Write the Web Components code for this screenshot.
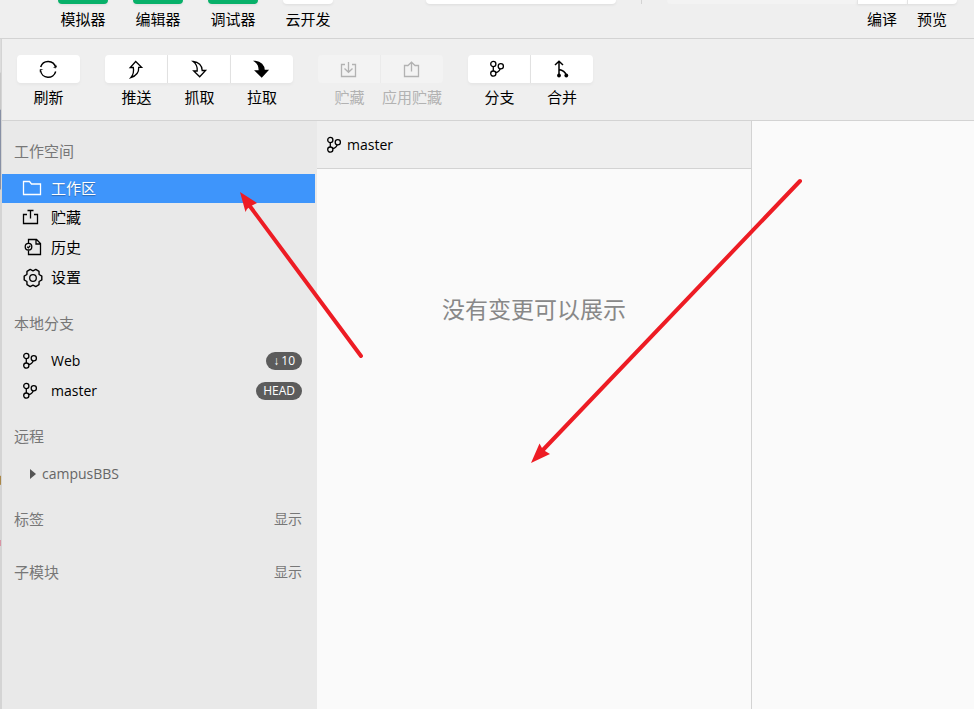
<!DOCTYPE html>
<html lang="zh-CN">
<head>
<meta charset="utf-8">
<title>版本管理</title>
<style>
html, body { height: 100%; }
body { margin: 0; background: #efefef; color: #000; font: 15px/24px "Open Sans", "Noto Sans CJK SC", sans-serif; }
</style>
</head>
<body>
<git-app></git-app>
<script>
const RESET = `*{box-sizing:border-box}
button{font:inherit;color:inherit;background:none;border:0;margin:0;padding:0;cursor:pointer}`;

function define(name, css, html, setup) {
  const template = document.createElement('template');
  template.innerHTML = `<style>${RESET}${css}</style>${html}`;
  customElements.define(name, class extends HTMLElement {
    connectedCallback() {
      if (this.shadowRoot) return;
      const root = this.attachShadow({ mode: 'open' });
      root.append(template.content.cloneNode(true));
      if (setup) setup(this, root);
    }
  });
}

const ICONS = {
  refresh: `<path stroke-width="1.500" d="M1.700 8A7.800 8 0 0 1 16.700 8.500M16.700 12.500A7.800 8 0 0 1 1.500 11.500"/><path fill="currentColor" stroke="none" d="M13.800 8.200H17.800V5.500L16.500 9.500ZM.8 13.500V10.200H4.500L2 11.200Z"/>`,
  push: `<path d="M9.700 2.500 15.600 8.300H12.700C13 13 10 17 4.800 18.600 7.500 15.500 8 12 7.300 8.500H4.200Z"/>`,
  fetch: `<path d="M4.200 2.500C9.500 3 13.200 6.500 13.200 11.500H16.600L10.700 17.800 4.700 12H8.200C8.600 8 7.500 5 4.200 2.500Z"/>`,
  pull: `<path fill="currentColor" d="M3.200 2.500C8.500 3 12.200 6.500 12.200 11.500H15.600L9.700 17.800 3.700 12H7.200C7.600 8 6.500 5 3.200 2.500Z"/>`,
  save: `<path d="M6 5.500H2.500V17.500H16.500V5.500H13M9.500 3V13M5.500 9.500 9.500 13.300 13.500 9.500"/>`,
  apply: `<path d="M6 6.500H2.500V17.500H16.500V6.500H13M9.500 12.500V3.500M5.500 7 9.500 3.200 13.500 7"/>`,
  branch: `<circle cx="4.300" cy="5" r="2.600"/><circle cx="4.300" cy="14.600" r="2.600"/><circle cx="11.800" cy="7.300" r="2.600"/><path d="M4.300 7.600V12M11.200 9.900C10.500 12 8.500 13.300 6.700 13.700"/>`,
  merge: `<path stroke-width="1.500" d="M7 16.500V2.500M3 6 7 2.200 11 6M7 10.500C10 11 13 12.500 14.300 16"/><circle cx="7" cy="16.500" r="1.900" fill="currentColor" stroke="none"/><circle cx="14.300" cy="16.500" r="1.900" fill="currentColor" stroke="none"/>`,
  folder: `<path d="M1.500 15.500V2.500H7.500L9.500 5H18.500V15.500Z"/>`,
  stash: `<path d="M5 6.500H1.500V15.500H15.500V6.500H12M8.500 10.500V2.500M5.500 2.500H11.500"/>`,
  history: `<path d="M6.500 5V1.500H14.500L18.500 5.500V16.500H6.500V12.500M14 1.500V6H18.500"/><circle cx="6.500" cy="8.700" r="3.300"/><path d="M5.200 8.700 6.400 9.800 8.300 7.600"/>`,
  gear: `<path stroke-linejoin="round" stroke-width="1.400" d="M19.800 11.900 17.100 13.500 17 16.700 13.800 18.600 11 17.200 8.200 18.600 5 16.700 4.900 13.500 2.200 11.900V8.100L4.900 6.500 5 3.300 8.200 1.400 11 2.800 13.800 1.400 17 3.300 17.100 6.500 19.800 8.100Z"/><circle cx="11" cy="10" r="3.300"/>`
};

define('ui-icon',
  `:host{display:block;width:20px;height:20px;flex:none}
   svg{display:block;width:100%;height:100%;overflow:visible;fill:none;stroke:currentColor;stroke-width:1.300}`,
  `<svg viewBox="0 0 20 20" aria-hidden="true"></svg>`,
  (el, root) => { root.querySelector('svg').innerHTML = ICONS[el.getAttribute('name')]; });

/* Tab of the upper bar: the lower edge of its button, then its label */
define('bar-button',
  `:host{display:block;min-width:50px}
   button{display:block;width:100%}
   i{display:block;height:4px;margin-bottom:3px;background:#fff;border-radius:0 0 4px 4px;box-shadow:0 1px 3px rgba(0,0,0,.08)}
   :host([active]) i{background:#07b069}
   :host([joined]) i{border-left:1px solid #e4e4e4;border-radius:0}
   :host([joined]:last-child) i{border-bottom-right-radius:4px}
   span{display:block;line-height:24px;white-space:nowrap}`,
  `<button type="button"><i></i><span><slot></slot></span></button>`);

define('top-bar',
  `:host{display:flex;align-items:flex-start;height:39px;border-bottom:1px solid #d3d3d3;padding:0 17px 0 58px}
   nav{display:flex;gap:25px}
   .mode{width:190px;height:4px;margin-left:93px;background:#fff;border-radius:0 0 4px 4px;box-shadow:0 1px 3px rgba(0,0,0,.08)}
   .rule{width:1px;height:4px;margin-left:25px;background:#d3d3d3}
   .target{flex:1;height:4px;margin-left:25px;background:#f3f3f3;border-radius:0 0 0 4px}
   .run{display:flex}`,
  `<nav>
    <bar-button active>模拟器</bar-button><bar-button active>编辑器</bar-button>
    <bar-button active>调试器</bar-button><bar-button>云开发</bar-button>
  </nav>
  <div class="mode"></div><div class="rule"></div><div class="target"></div>
  <div class="run"><bar-button joined>编译</bar-button><bar-button joined>预览</bar-button></div>`);

define('tool-button',
  `:host{display:block;width:63px}
   :host(:last-child:not(:first-child)){width:62px}
   button{display:block;width:100%}
   button:disabled{color:#b2b2b2;cursor:default}
   .face{display:flex;align-items:center;justify-content:center;height:28px;background:#fff;box-shadow:0 2px 3px rgba(0,0,0,.04);border-right:1px solid #e4e4e4}
   button:disabled .face{background:#f3f3f3;border-color:#ebebeb;box-shadow:none}
   :host(:first-child) .face{border-radius:4px 0 0 4px}
   :host(:last-child) .face{border-radius:0 4px 4px 0;border-right:0}
   :host(:only-child) .face{border-radius:4px}
   .label{display:block;margin-top:2px;line-height:24px;white-space:nowrap}`,
  `<button type="button"><span class="face"></span><span class="label"><slot></slot></span></button>`,
  (el, root) => {
    const icon = document.createElement('ui-icon');
    icon.setAttribute('name', el.getAttribute('icon'));
    root.querySelector('.face').append(icon);
    root.querySelector('button').disabled = el.hasAttribute('disabled');
  });

define('tool-bar',
  `:host{display:flex;gap:25px;padding:16px 15px 11px;background:#efefef;border-bottom:1px solid #d3d3d3}
   div{display:flex}`,
  `<div><tool-button icon="refresh">刷新</tool-button></div>
   <div><tool-button icon="push">推送</tool-button><tool-button icon="fetch">抓取</tool-button><tool-button icon="pull">拉取</tool-button></div>
   <div><tool-button icon="save" disabled>贮藏</tool-button><tool-button icon="apply" disabled>应用贮藏</tool-button></div>
   <div><tool-button icon="branch">分支</tool-button><tool-button icon="merge">合并</tool-button></div>`);

define('side-section',
  `:host{display:block;padding-top:15px}
   header{display:flex;align-items:center;justify-content:space-between;height:30px;margin-bottom:8px;padding:0 15px 0 12px;color:#777}
   h2{margin:0;font-size:15px;font-weight:400}
   button{font-size:14px}`,
  `<header><h2></h2></header><slot></slot>`,
  (el, root) => {
    root.querySelector('h2').textContent = el.getAttribute('heading');
    if (el.hasAttribute('action')) {
      const button = document.createElement('button');
      button.type = 'button';
      button.textContent = el.getAttribute('action');
      root.querySelector('header').append(button);
    }
  });

define('side-item',
  `:host{display:block}
   button{display:flex;align-items:center;gap:9px;width:100%;height:30px;padding:0 15px 0 20px;text-align:left}
   .text{flex:1;padding-bottom:2px}
   :host([latin]) .text{font-size:14px;padding:0}
   :host([selected]) button{height:29px;width:calc(100% - 2px);background:#3e95fb;color:#fff;text-shadow:0 1px 1px rgba(0,0,0,.3)}`,
  `<button type="button"><span class="text"><slot></slot></span><slot name="badge"></slot></button>`,
  (el, root) => {
    const icon = document.createElement('ui-icon');
    icon.setAttribute('name', el.getAttribute('icon'));
    root.querySelector('button').prepend(icon);
  });

define('count-badge',
  `:host{display:flex;gap:2px;height:18px;padding:0 7px;border-radius:9px;background:#5c5c5c;color:#fff;font-size:12px;line-height:18px}
   ::slotted(.arrow){font-family:"Liberation Sans",sans-serif}`,
  `<slot></slot>`);

define('tree-item',
  `:host{display:block}
   button{display:flex;align-items:center;gap:6px;width:100%;height:30px;padding:0 28px;color:#666;font-size:14px}
   i{border:solid transparent;border-width:5px 0 5px 6px;border-left-color:#555}`,
  `<button type="button" aria-expanded="false"><i></i><slot></slot></button>`);

define('side-bar',
  `:host{display:block;background:#e9e9e9}`,
  `<side-section heading="工作空间">
     <side-item icon="folder" selected>工作区</side-item>
     <side-item icon="stash">贮藏</side-item>
     <side-item icon="history">历史</side-item>
     <side-item icon="gear">设置</side-item>
   </side-section>
   <side-section heading="本地分支">
     <side-item icon="branch" latin>Web<count-badge slot="badge"><span class="arrow">↓</span><span>10</span></count-badge></side-item>
     <side-item icon="branch" latin>master<count-badge slot="badge">HEAD</count-badge></side-item>
   </side-section>
   <side-section heading="远程"><tree-item>campusBBS</tree-item></side-section>
   <side-section heading="标签" action="显示"></side-section>
   <side-section heading="子模块" action="显示"></side-section>`);

define('change-list',
  `:host{display:flex;flex-direction:column;border-right:1px solid #d3d3d3}
   header{display:flex;align-items:center;gap:1px;height:48px;padding:0 9px;background:#efefef;border-bottom:1px solid #d3d3d3;font-size:14px}
   p{margin:0;padding-top:124px;text-align:center;font-size:23px;line-height:32px;color:#888}`,
  `<header><ui-icon name="branch"></ui-icon><span>master</span></header><p>没有变更可以展示</p>`);

/* Red pointer arrows laid over the window */
define('arrow-marks',
  `:host{position:absolute;left:0;top:0;pointer-events:none}
   svg{display:block}`,
  `<svg width="804" height="470" viewBox="0 0 804 470" fill="#ed1c24" stroke="#ed1c24" aria-hidden="true">
     <path stroke-width="4" stroke-linecap="round" d="M361 356 249 205M800 181 541 452"/>
     <path stroke="none" d="M240 192 257 203 251 206 247 209 245.500 212ZM531 463 539.500 443.500 542 448 545 451 550 454Z"/>
   </svg>`);

define('git-app',
  `:host{position:relative;display:flex;flex-direction:column;min-height:100%;overflow:hidden}
   .window{flex:1;display:flex;flex-direction:column;padding-left:1px;background:#d4d4d4;border-left:1px solid;border-image:linear-gradient(#dcdcdc 34px,#c8c8c8 35px 71px,#8790a5 72px 150px,#d4d4d4 152px 436px,#aa8748 437px 445px,#d4d4d4 446px 500px,#d895a5 501px 506px,#d4d4d4 507px) 1}
   .panes{flex:1;display:grid;grid-template-columns:315px 435px minmax(0,1fr);background:#fafafa}`,
  `<top-bar></top-bar>
   <div class="window"><tool-bar></tool-bar>
     <div class="panes"><side-bar></side-bar><change-list></change-list><main></main></div>
   </div>
   <arrow-marks></arrow-marks>`);
</script>
</body>
</html>
